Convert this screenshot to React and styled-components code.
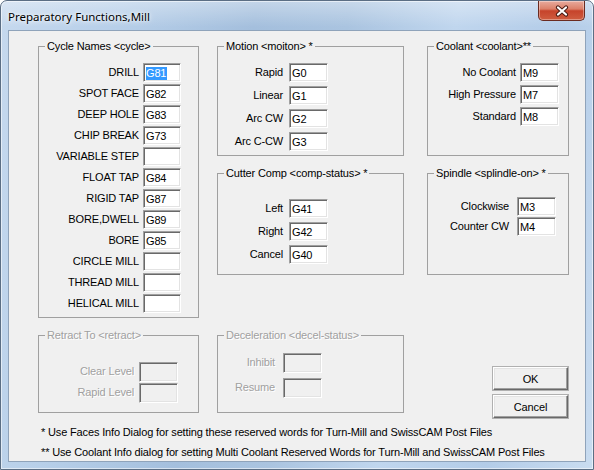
import React from "react";
import styled, { createGlobalStyle } from "styled-components";

const uiFont = `"Liberation Sans", Arial, sans-serif`;

const GlobalStyle = createGlobalStyle`
  html, body {
    margin: 0;
    padding: 0;
    background: #ffffff;
  }
  body {
    font-family: ${uiFont};
    font-size: 11px;
    letter-spacing: -0.15px;
  }
`;

const Window = styled.div`
    width: 594px;
    height: 470px;
    box-sizing: border-box;
    display: flex;
    flex-direction: column;
    padding: 0 7px 7px;
    border: 1px solid #5b6e84;
    border-radius: 7px 7px 0 0;
    background:
        linear-gradient(180deg, rgba(255, 255, 255, 0.35) 0, rgba(255, 255, 255, 0) 26px),
        linear-gradient(100deg, #c6d9ee 0%, #b7cfe9 18%, #a4bfdd 38%, #aac4e0 52%, #c0d6ee 68%, #b3cce8 84%, #c9dcf0 100%);
    box-shadow: inset 0 0 0 1px rgba(255, 255, 255, 0.55);
    overflow: hidden;
`;

const TitleBar = styled.div`
    height: 29px;
    flex: none;
    display: flex;
    justify-content: space-between;
    align-items: flex-start;
`;

const Title = styled.div`
    font-family: "Noto Sans", "Open Sans", sans-serif;
    font-size: 11.5px;
    letter-spacing: 0;
    line-height: 16px;
    margin-top: 8px;
    color: #000;
    text-shadow: 0 0 6px rgba(255, 255, 255, 0.95), 0 0 3px rgba(255, 255, 255, 0.9);
`;

const CloseButton = styled.div`
    width: 47px;
    height: 20px;
    box-sizing: border-box;
    margin-right: 1px;
    border: 1px solid #6a2b20;
    border-top: none;
    border-radius: 0 0 5px 5px;
    background: linear-gradient(180deg, #e8ab9e 0%, #dc8069 42%, #c6432b 52%, #cf5d40 100%);
    box-shadow: inset 0 0 0 1px rgba(255, 255, 255, 0.35);
    display: flex;
    align-items: center;
    justify-content: center;
`;

const Client = styled.div`
    flex: 1;
    box-sizing: border-box;
    background: #f0f0f0;
    border: 1px solid #8fa3ba;
    padding: 9px 0 0 29px;
    overflow: hidden;
`;

const Layout = styled.div`
    display: grid;
    grid-template-columns: 161px 187px 147px;
    column-gap: 18px;
    row-gap: 11px;
    align-items: start;
`;

const Stack = styled.div`
    display: flex;
    flex-direction: column;
    gap: 11px;
    padding-left: ${p => p.$indent || 0}px;
`;

const Group = styled.fieldset`
    box-sizing: border-box;
    margin: 0;
    padding: 0;
    min-width: 0;
    height: ${p => p.$h}px;
    border: 1px solid #a0a0a0;
`;

const Caption = styled.legend`
    margin-left: 6px;
    padding: 0 2px;
    font-family: ${uiFont};
    font-size: 11px;
    line-height: 13px;
    color: ${p => (p.$disabled ? "#a0a0a0" : "#000")};
    text-shadow: ${p => (p.$disabled ? "1px 1px 0 #fff" : "none")};
`;

const Body = styled.div`
    display: grid;
    grid-template-columns: ${p => p.$lw}px ${p => p.$iw}px;
    grid-auto-rows: ${p => p.$rh}px;
    column-gap: ${p => p.$cg}px;
    row-gap: ${p => p.$rg}px;
    padding: ${p => p.$pt}px 0 0 ${p => p.$pl}px;
    align-items: center;
`;

const Label = styled.div`
    justify-self: end;
    white-space: nowrap;
    font-size: 11px;
    line-height: 13px;
    margin-top: -1px;
    color: ${p => (p.$disabled ? "#a0a0a0" : "#000")};
    text-shadow: ${p => (p.$disabled ? "1px 1px 0 #fff" : "none")};
`;

const Field = styled.div`
    height: 100%;
    box-sizing: border-box;
    border-top: 1px solid #a0a0a0;
    border-left: 1px solid #a0a0a0;
    border-right: 1px solid #ffffff;
    border-bottom: 1px solid #ffffff;
    box-shadow: inset 1px 1px 0 #696969, inset -1px -1px 0 #e3e3e3;
    background: ${p => (p.$disabled ? "#f0f0f0" : "#ffffff")};
    padding: 1px 0 0 2px;
    display: flex;
    align-items: center;
    font-size: 11px;
    color: #000;
    white-space: nowrap;
    overflow: hidden;
`;

const Selected = styled.span`
    background: #3399ff;
    color: #ffffff;
    line-height: 13px;
    padding-right: 1px;
`;

const ButtonColumn = styled.div`
    display: flex;
    flex-direction: column;
    align-items: flex-end;
    gap: 5px;
    padding: 38px 1px 0 0;
`;

const PushButton = styled.div`
    width: 75px;
    height: 23px;
    box-sizing: border-box;
    background: #f0f0f0;
    border-top: 1px solid #ffffff;
    border-left: 1px solid #ffffff;
    border-right: 1px solid #696969;
    border-bottom: 1px solid #696969;
    box-shadow: inset -1px -1px 0 #a0a0a0, inset 1px 1px 0 #e3e3e3, 0 0 0 1px #b0b0b0;
    display: flex;
    align-items: center;
    justify-content: center;
    font-size: 11px;
    color: #000;
`;

const Notes = styled.div`
    margin-top: 4px;
    padding-left: 3px;
    font-size: 11px;
    line-height: 20px;
    color: #000;
    white-space: nowrap;
`;

const cycles = [
    ["DRILL", "G81", true],
    ["SPOT FACE", "G82"],
    ["DEEP HOLE", "G83"],
    ["CHIP BREAK", "G73"],
    ["VARIABLE STEP", ""],
    ["FLOAT TAP", "G84"],
    ["RIGID TAP", "G87"],
    ["BORE,DWELL", "G89"],
    ["BORE", "G85"],
    ["CIRCLE MILL", ""],
    ["THREAD MILL", ""],
    ["HELICAL MILL", ""],
];

const motion = [["Rapid", "G0"], ["Linear", "G1"], ["Arc CW", "G2"], ["Arc C-CW", "G3"]];
const cutter = [["Left", "G41"], ["Right", "G42"], ["Cancel", "G40"]];
const coolant = [["No Coolant", "M9"], ["High Pressure", "M7"], ["Standard", "M8"]];
const spindle = [["Clockwise", "M3"], ["Counter CW", "M4"]];
const retract = [["Clear Level", ""], ["Rapid Level", ""]];
const decel = [["Inhibit", ""], ["Resume", ""]];

const GroupBox = ({ title, h, rows, layout, disabled }) => (
    <Group $h={h}>
        <Caption $disabled={disabled}>{title}</Caption>
        <Body {...layout}>
            {rows.map(([label, value, sel]) => (
                <React.Fragment key={label}>
                    <Label $disabled={disabled}>{label}</Label>
                    <Field $disabled={disabled}>
                        {sel ? <Selected>{value}</Selected> : value}
                    </Field>
                </React.Fragment>
            ))}
        </Body>
    </Group>
);

const CloseIcon = () => (
    <svg width="14" height="12" viewBox="0 0 14 12">
        <path d="M3 2.5 L11 9.5 M11 2.5 L3 9.5" stroke="#4a1c14" strokeWidth="4.2" strokeLinecap="round" />
        <path d="M3 2.5 L11 9.5 M11 2.5 L3 9.5" stroke="#ffffff" strokeWidth="2.2" strokeLinecap="round" />
    </svg>
);

const App = () => {
    return (
        <>
            <GlobalStyle />
            <Window>
                <TitleBar>
                    <Title>Preparatory Functions,Mill</Title>
                    <CloseButton>
                        <CloseIcon />
                    </CloseButton>
                </TitleBar>
                <Client>
                    <Layout>
                        <GroupBox
                            title="Cycle Names <cycle>"
                            h={278}
                            rows={cycles}
                            layout={{ $lw: 96, $iw: 38, $rh: 19, $cg: 4, $rg: 2, $pt: 10, $pl: 4 }}
                        />
                        <Stack>
                            <GroupBox
                                title="Motion <moiton> *"
                                h={116}
                                rows={motion}
                                layout={{ $lw: 61, $iw: 39, $rh: 19, $cg: 6, $rg: 4, $pt: 10, $pl: 4 }}
                            />
                            <GroupBox
                                title="Cutter Comp <comp-status> *"
                                h={108}
                                rows={cutter}
                                layout={{ $lw: 61, $iw: 39, $rh: 19, $cg: 6, $rg: 4, $pt: 19, $pl: 4 }}
                            />
                        </Stack>
                        <Stack $indent={5}>
                            <GroupBox
                                title="Coolant <coolant>**"
                                h={116}
                                rows={coolant}
                                layout={{ $lw: 84, $iw: 39, $rh: 19, $cg: 4, $rg: 3, $pt: 10, $pl: 4 }}
                            />
                            <GroupBox
                                title="Spindle <splindle-on> *"
                                h={108}
                                rows={spindle}
                                layout={{ $lw: 77, $iw: 39, $rh: 19, $cg: 8, $rg: 1, $pt: 17, $pl: 4 }}
                            />
                        </Stack>
                        <GroupBox
                            title="Retract To <retract>"
                            h={84}
                            rows={retract}
                            disabled
                            layout={{ $lw: 91, $iw: 39, $rh: 20, $cg: 5, $rg: 1, $pt: 20, $pl: 4 }}
                        />
                        <GroupBox
                            title="Deceleration <decel-status>"
                            h={84}
                            rows={decel}
                            disabled
                            layout={{ $lw: 53, $iw: 39, $rh: 20, $cg: 8, $rg: 5, $pt: 11, $pl: 4 }}
                        />
                        <ButtonColumn>
                            <PushButton>OK</PushButton>
                            <PushButton>Cancel</PushButton>
                        </ButtonColumn>
                    </Layout>
                    <Notes>
                        <div>* Use Faces Info Dialog for setting these reserved words for Turn-Mill and SwissCAM Post Files</div>
                        <div>** Use Coolant Info dialog for setting Multi Coolant Reserved Words for Turn-Mill and SwissCAM Post Files</div>
                    </Notes>
                </Client>
            </Window>
        </>
    );
};

export default App;
